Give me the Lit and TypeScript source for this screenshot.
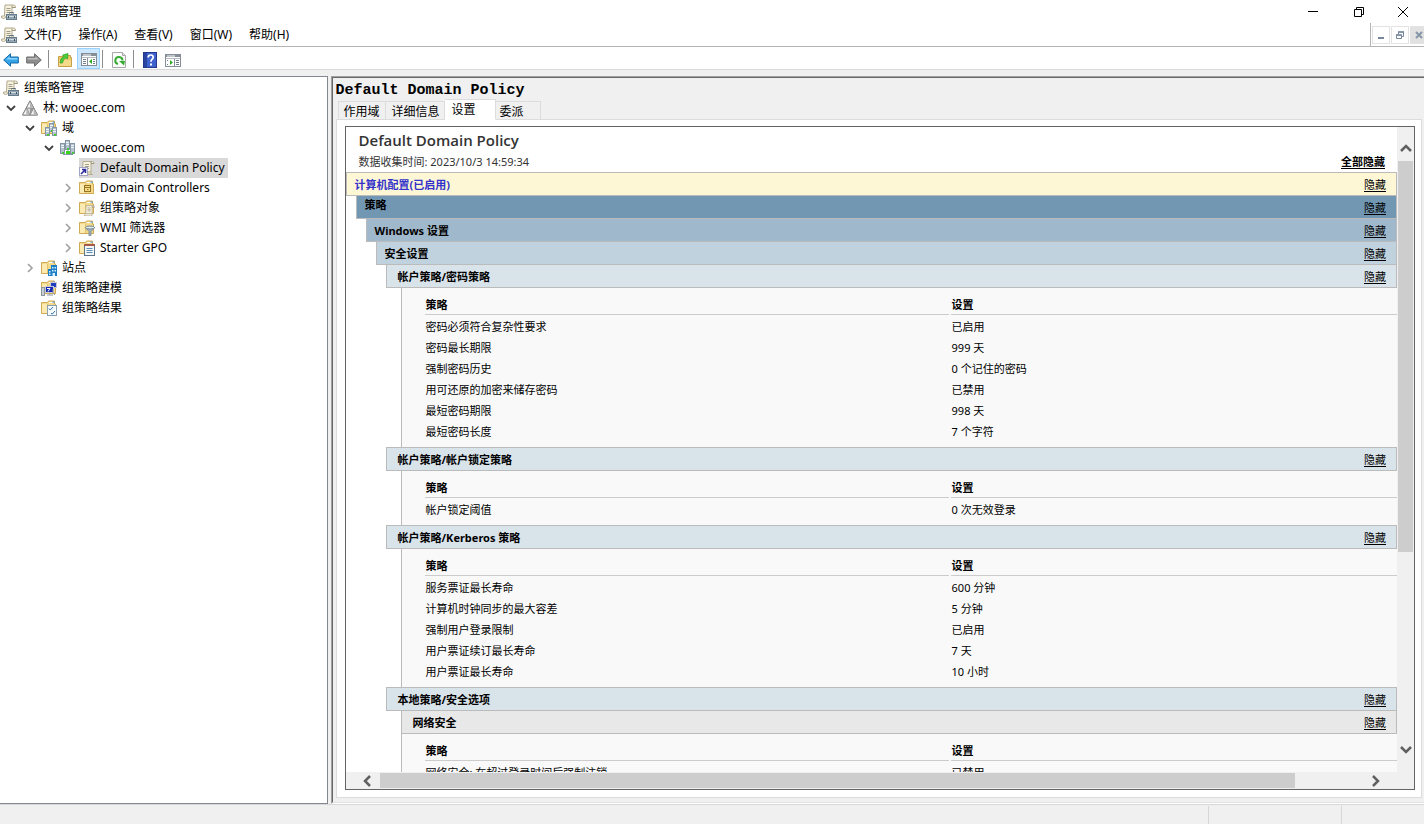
import { LitElement, html, svg, css, nothing } from "lit";
import { customElement, property, state } from "lit/decorators.js";
import { classMap } from "lit/directives/class-map.js";

const folder = svg`
  <path d="M.5 2.500h6l1-1.500h6v3h1v9.500H.5z" fill="#f3d98b" stroke="#d0aa55"/>
  <path d="M8 2.500h5" stroke="#fff"/><path d="M11.500 1.500h2v1.200h-2z" fill="#4a9be0"/>
  <path d="M1 4h5v9H1z" fill="#fbeab2"/><path d="M6.500 4v9" stroke="#e3c26c"/>`;

const scroll = svg`
  <path d="M4 1.500h9.500q1.500 0 1.500 2h-3v8.500H3.500z" fill="#f7f2de" stroke="#b3ab90"/>
  <path d="M12 1.500v2h3" fill="none" stroke="#9d957b"/>
  <path d="M6 4.500h4M6 6.500h4M6 8.500h4" stroke="#a5a08b"/>`;

const tower = (x: number, y: number, h: number) => svg`
  <rect x=${x + 0.5} y=${y + 0.5} width="4" height=${h} fill="#b4c3cd" stroke="#8195a2"/>
  <path d=${`M${x + 1} ${y + 2.5}h3M${x + 1} ${y + 4.5}h3`} stroke="#eef4f7"/>
  <rect x=${x + 2} y=${y + h - 1} width="2" height="1.500" fill="#39d41c"/>`;

const facet = (x: number, y: number) => svg`
  <path d=${`M${x} ${y}l-3.700 7h7.400z`} fill="#f4f4f4" stroke="#7d7d7d" stroke-width=".8"/>
  <path d=${`M${x} ${y + 0.8}v6h3.200z`} fill="#b5b5b5"/>`;

const icons: Record<string, unknown> = {
  gpm: svg`
    <path d="M4 1h8.500q2 0 2 2.500H11V12H5q0 2.500-2.500 2.500T.5 12H3.500z" fill="#f7f2de" stroke="#b0a88e"/>
    <path d="M11 1.500v2h3.500" fill="none" stroke="#9d957b"/>
    <path d="M5.500 4.500h4M5.500 6.500h4M5.500 8.500h3" stroke="#a19c88"/>
    <path d="M8.500 9.500V8.500h4v1" fill="none" stroke="#5b6b77"/>
    <rect x="5.500" y="10.500" width="10" height="5" fill="#93a5b2" stroke="#667c8a"/>
    <path d="M6 12.500h9" stroke="#cfdbe2"/><path d="M7.500 12v2M13.500 12v2" stroke="#43535e"/>`,
  forest: svg`
    <path d="M8 .8L15.500 15H.5z" fill="#8f8f8f" stroke="#808080"/>
    <path d="M4.600 8.200h6.800L8 14.600z" fill="#dcdcdc"/><path d="M8 8.200h3.400L8 14.600z" fill="#9b9b9b"/>
    ${facet(8, 1)}${facet(4.300, 8)}${facet(11.700, 8)}`,
  domains: svg`${folder}${tower(8, 3, 8)}${tower(4, 7, 8)}${tower(11, 7, 8)}`,
  domain: svg`${tower(5, 0, 9)}${tower(0, 3, 10)}${tower(10, 3, 10)}
    <path d="M8 10v3M3 14.500h10" stroke="#8195a2"/><rect x="6" y="11" width="4" height="3" fill="#39d41c"/>`,
  link: svg`${scroll}<path d="M11.500 11.500q0 3 2 3H7" fill="#e5dcb9" stroke="#b3ab90"/>
    <rect x=".5" y="7.500" width="8" height="8" fill="#fff" stroke="#a3a3c4"/>
    <path d="M2 14l4-4M3 9.500h3.500V13" stroke="#2a2a9a" stroke-width="1.600" fill="none"/>`,
  ou: svg`${folder}<rect x="5.500" y="5.500" width="6" height="6" fill="#f8dc84" stroke="#94721f"/>
    <path d="M6 7.500h5M8 9.500h1.500" stroke="#94721f"/>`,
  gpos: svg`${folder}<g transform="translate(4 4.500) scale(.76)">${scroll}<path d="M3 12q0 3-2 3h9q3 0 2-3z" fill="#f7f2de" stroke="#b3ab90"/></g>`,
  wmi: svg`${folder}<path d="M6 7.500h10l-4 4v4l-2 .5v-4.500z" fill="#a3b4bf" stroke="#708592" stroke-width=".8"/>
    <ellipse cx="11" cy="7.500" rx="4.500" ry="1.500" fill="#e3ebef" stroke="#708592"/>`,
  starter: svg`${folder}<rect x="5.500" y="4.500" width="10" height="11" fill="#f3f7fa" stroke="#5d7589"/>
    <path d="M5 4h11v2H5z" fill="#a65a48"/><path d="M7.500 8.500h6M7.500 10.500h6M7.500 12.500h6" stroke="#5c8db5"/>`,
  sites: svg`${folder}<path d="M7 9h3V5h6v11H7z" fill="#1c7fc6"/>
    <path d="M11 7h1.500v1.500H11zM13.500 7H15v1.500h-1.500zM11 10h1.500v1.500H11zM13.500 10H15v1.500h-1.500zM8 11h1.500v1.500H8zM8 13.500h1.500V15H8zM11.500 13H14v3h-2.500z" fill="#d5efff"/>`,
  modeling: svg`${folder}<rect x="9.500" y="2.500" width="6" height="5" fill="#223fc0" stroke="#c8ccd2"/>
    <rect x=".5" y="7.500" width="3" height="8" fill="#c6cdd2" stroke="#8a959c"/>
    <rect x="4.500" y="6.500" width="8" height="6" fill="#1626b4" stroke="#c8ccd2"/>
    <path d="M6 8.500h3l-2 3" stroke="#fff" fill="none"/><path d="M8.500 13v1.500M6 15h6" stroke="#8a959c"/>
    <path d="M12 9v4l2 2" stroke="#8a959c" fill="none"/>`,
  results: svg`${folder}<rect x="6.500" y="5.500" width="9" height="10" fill="#f6fafc" stroke="#8ba0af"/>
    <path d="M8 8.500L9.200 10 12 7M10 13l1.200 1.200L14 11" stroke="#2f78b5" fill="none"/>`,
  back: svg`<path d="M.7 8L7.500 1.800V5H15.300v6H7.500v3.200z" fill="#35a4e8" stroke="#1667a8"/><path d="M3 7.500L6.500 4.500V6H14.500v1.500z" fill="#8bd3fb"/>`,
  forward: svg`<path d="M15.300 8L8.500 1.800V5H.7v6H8.500v3.200z" fill="#8d8d8d" stroke="#6c6c6c"/><path d="M13 7.500L9.500 4.500V6H1.500v1.500z" fill="#bdbdbd"/>`,
  up: svg`<path d="M1.500 4.500h6l1-1h5v2h1v9h-13z" fill="#edc968" stroke="#c79f45"/><path d="M2 8h12v6H2z" fill="#f5da8b"/>
    <path d="M3 11q0-5 4-6.500L5.500 3 11 1.500 10.500 7 9 5.800Q6 7 5.500 11z" fill="#4bd03a" stroke="#2b9c22" stroke-width=".7"/>`,
  treeview: svg`<rect x=".5" y="2.500" width="15" height="12" fill="#fff" stroke="#858e96"/><path d="M1 3h14v2H1z" fill="#858e96"/><path d="M2 4h8" stroke="#fff"/>
    <path d="M1 6.500h14" stroke="#b5bbc1"/><path d="M6.500 7v7" stroke="#858e96"/><path d="M2 8.500h3M2 10.500h3M2 12.500h3M12 8.500h2M12 10.500h2M12 12.500h2" stroke="#71808d"/>
    <path d="M11 8v5L8 10.500z" fill="#2fae24"/>`,
  actions: svg`<rect x=".5" y="2.500" width="15" height="12" fill="#fff" stroke="#858e96"/><path d="M1 3h14v2H1z" fill="#858e96"/><path d="M2 4h8" stroke="#fff"/>
    <path d="M1 6.500h14" stroke="#b5bbc1"/><path d="M9.500 7v7" stroke="#858e96"/><path d="M11 8.500h3M11 10.500h3M11 12.500h3M2 8.500h1M2 12.500h1" stroke="#71808d"/>
    <path d="M5 8v5l3-2.500z" fill="#2fae24"/>`,
  refresh: svg`<path d="M1.500.5h10l3 3v12h-13z" fill="#fdfdfd" stroke="#a8a8a8"/><path d="M11.500.5v3h3" fill="#ddd" stroke="#a8a8a8"/>
    <path d="M7 12A3.600 3.600 0 1 1 11.500 8.500" fill="none" stroke="#36ac31" stroke-width="2"/><path d="M8 9h6l-1 4.500z" fill="#36ac31"/>`,
  help: svg`<rect x="1.500" y=".5" width="13" height="15" fill="#3f62cf" stroke="#23378c"/><path d="M2 1h3v14H2z" fill="#2a459f"/>
    <path d="M6.200 5.500Q6.200 3 8.800 3 11.200 3 11.200 5.200 11.200 6.600 9.800 7.500 9 8 9 9.800" fill="none" stroke="#fff" stroke-width="1.700"/><rect x="8" y="11.500" width="2" height="2" fill="#fff"/>`,
};

const icon = (name: string) => html`<svg class="icon" viewBox="0 0 16 16" width="16" height="16" aria-hidden="true">${icons[name]}</svg>`;

const chevron = (dir: "up" | "down" | "left" | "right") => {
  const d = { up: "M1 9l5-5 5 5", down: "M1 3l5 5 5-5", left: "M9 1L4 6l5 5", right: "M3 1l5 5-5 5" }[dir];
  return html`<svg viewBox="0 0 12 12" width="12" height="12" aria-hidden="true"><path d=${d} fill="none" stroke="#606060" stroke-width="2.500"/></svg>`;
};

const base = css`
  * { box-sizing: border-box; }
  button { font: inherit; color: inherit; background: none; border: 0; padding: 0; margin: 0; }
  svg { display: block; flex: none; }
`;

interface Node { label: string; icon: string; depth: number; open?: boolean; selected?: boolean; }

const nodes: Node[] = [
  { label: "组策略管理", icon: "gpm", depth: 0 },
  { label: "林: wooec.com", icon: "forest", depth: 1, open: true },
  { label: "域", icon: "domains", depth: 2, open: true },
  { label: "wooec.com", icon: "domain", depth: 3, open: true },
  { label: "Default Domain Policy", icon: "link", depth: 4, selected: true },
  { label: "Domain Controllers", icon: "ou", depth: 4, open: false },
  { label: "组策略对象", icon: "gpos", depth: 4, open: false },
  { label: "WMI 筛选器", icon: "wmi", depth: 4, open: false },
  { label: "Starter GPO", icon: "starter", depth: 4, open: false },
  { label: "站点", icon: "sites", depth: 2, open: false },
  { label: "组策略建模", icon: "modeling", depth: 2 },
  { label: "组策略结果", icon: "results", depth: 2 },
];

@customElement("console-tree")
class ConsoleTree extends LitElement {
  static styles = [base, css`
    :host { display: block; background: #fff; border: 1px solid #828790; border-width: 1px 1px 1px 0; padding-top: 1px; overflow: hidden; }
    .tree { list-style: none; margin: 0; padding: 0 0 0 3px; }
    .row { display: flex; align-items: center; height: 20px; white-space: nowrap; }
    .d2 { padding-left: 19px; } .d3 { padding-left: 38px; } .d4 { padding-left: 57px; }
    .twisty { width: 16px; height: 16px; margin-right: 3px; display: grid; place-items: center; flex: none; }
    .item { display: flex; align-items: center; height: 20px; }
    .icon { margin: 0 2px 0 0; }
    .label { padding: 0 3px; height: 20px; line-height: 20px; }
    .selected { background: #d9d9d9; }
  `];
  render() {
    return html`<ul class="tree" role="tree" aria-label="组策略管理">
      ${nodes.map((n) => html`<li class="row d${n.depth}" role="treeitem" aria-selected=${n.selected ? "true" : "false"}>
        ${n.depth === 0 ? nothing : n.open === undefined ? html`<span class="twisty"></span>` : html`<button class="twisty" aria-label=${n.label}>
          <svg viewBox="0 0 10 10" width="10" height="10">${n.open
            ? svg`<path d="M1 3l4 4 4-4" fill="none" stroke="#404040" stroke-width="1.800"/>`
            : svg`<path d="M3 1l4 4-4 4" fill="none" stroke="#a0a0a0" stroke-width="1.600"/>`}</svg></button>`}
        <span class=${classMap({ item: true, selected: !!n.selected })}>${icon(n.icon)}<span class="label">${n.label}</span></span>
      </li>`)}
    </ul>`;
  }
}

type Rows = [string, string][];
interface Section { title: string; level: number; rows?: Rows; }

const sections: Section[] = [
  { title: "计算机配置(已启用)", level: 0 },
  { title: "策略", level: 1 },
  { title: "Windows 设置", level: 2 },
  { title: "安全设置", level: 3 },
  { title: "帐户策略/密码策略", level: 4, rows: [
    ["密码必须符合复杂性要求", "已启用"], ["密码最长期限", "999 天"], ["强制密码历史", "0 个记住的密码"],
    ["用可还原的加密来储存密码", "已禁用"], ["最短密码期限", "998 天"], ["最短密码长度", "7 个字符"]] },
  { title: "帐户策略/帐户锁定策略", level: 4, rows: [["帐户锁定阈值", "0 次无效登录"]] },
  { title: "帐户策略/Kerberos 策略", level: 4, rows: [
    ["服务票证最长寿命", "600 分钟"], ["计算机时钟同步的最大容差", "5 分钟"], ["强制用户登录限制", "已启用"],
    ["用户票证续订最长寿命", "7 天"], ["用户票证最长寿命", "10 小时"]] },
  { title: "本地策略/安全选项", level: 4 },
  { title: "网络安全", level: 5, rows: [["网络安全: 在超过登录时间后强制注销", "已禁用"]] },
];

@customElement("policy-report")
class PolicyReport extends LitElement {
  static styles = [base, css`
    :host { display: grid; grid-template: minmax(0, 1fr) 17px / minmax(0, 1fr) 17px; border: 1px solid #646464; background: #fff; font-size: 11px; line-height: 15px; color: #000; }
    .view { overflow: hidden; }
    .head { height: 45px; padding: 3px 12px 0 13px; color: #333; }
    .title { margin: 0; font-family: "Open Sans", "Noto Sans", sans-serif; font-size: 15px; line-height: 20px; font-weight: 600; }
    .meta { display: flex; justify-content: space-between; padding-top: 4px; }
    a { color: #000; text-decoration: underline; text-underline-offset: 2px; }
    .all { font-weight: 700; }
    .bar { display: flex; justify-content: space-between; align-items: center; height: 24px; margin: 0 0 -1px; padding: 1px 10px 0 8px; border: 1px solid #bbb; font-size: 11px; font-weight: 700; }
    .bar a { font-weight: 400; }
    .l0 { background: #fef7d6; color: #33c; }
    .l1 { background: #7197b3; margin-left: 10px; }
    .l1 .name { align-self: flex-start; }
    .l2 { background: #a0b8cb; margin-left: 20px; }
    .l3 { background: #c0d2de; margin-left: 30px; }
    .l4 { background: #d9e3ea; margin-left: 40px; padding-left: 11px; }
    .l5 { background: #e8e8e8; margin-left: 55px; padding-left: 11px; }
    .name { margin: 0; font: inherit; }
    .body { margin: 1px 0 0 55px; border-left: 1px solid #bbb; background: #f9f9f9; padding: 1px 0 6px 21px; overflow: hidden; }
    table { width: calc(100% + 2px); table-layout: fixed; border-spacing: 2px 0; border-collapse: separate; }
    .c1 { width: 54%; }
    th { text-align: left; font-weight: 700; padding: 8px 1px 2px; border-bottom: 1px solid #ccc; }
    td { padding: 4px 1px 2px; }
    .v, .h { background: #f0f0f0; display: flex; align-items: center; }
    .v { flex-direction: column; padding: 15px 1px 16px 1px; }
    .h { padding: 1px 15px 1px 15px; }
    .v .track, .h .track { flex: 1; display: flex; align-self: stretch; }
    .v .track { flex-direction: column; padding-top: 7px; }
    .h .track { padding: 0 0 0 7px; }
    .thumb { background: #cdcdcd; }
    .v .thumb { height: 67%; }
    .h .thumb { width: 92.4%; }
    .corner { background: #f0f0f0; }
  `];
  render() {
    return html`
      <div class="view">
        <header class="head">
          <h2 class="title">Default Domain Policy</h2>
          <div class="meta"><span>数据收集时间: 2023/10/3 14:59:34</span><a class="all" href="#">全部隐藏</a></div>
        </header>
        ${sections.map((s) => html`
          <div class="bar l${s.level}"><h3 class="name">${s.title}</h3><a href="#">隐藏</a></div>
          ${s.rows ? html`<div class="body"><table>
            <thead><tr><th class="c1" scope="col">策略</th><th scope="col">设置</th></tr></thead>
            <tbody>${s.rows.map(([k, v]) => html`<tr><td>${k}</td><td>${v}</td></tr>`)}</tbody>
          </table></div>` : nothing}`)}
      </div>
      <div class="v"><button aria-label="向上滚动">${chevron("up")}</button><div class="track"><div class="thumb"></div></div><button aria-label="向下滚动">${chevron("down")}</button></div>
      <div class="h"><button aria-label="向左滚动">${chevron("left")}</button><div class="track"><div class="thumb"></div></div><button aria-label="向右滚动">${chevron("right")}</button></div>
      <div class="corner"></div>`;
  }
}

@customElement("app-root")
class AppRoot extends LitElement {
  @property() heading = "Default Domain Policy";
  @state() private tab = "设置";

  static styles = [base, css`
    :host { display: flex; flex-direction: column; height: 100vh; background: #f0f0f0; overflow: hidden; color: #000;
      font-family: "Noto Sans", "Noto Sans CJK SC", sans-serif; font-size: 12px; line-height: 18px; }
    .caption { display: flex; align-items: center; height: 23px; background: #fff; padding-left: 1px; }
    .caption h1 { font: inherit; margin: 0 auto 0 4px; }
    .win { width: 46px; height: 22px; display: grid; place-items: center; }
    .win:last-child { width: 42px; }
    .menubar { display: flex; height: 24px; background: #fff; }
    .menus { flex: 1; display: flex; align-items: center; gap: 17px; padding-left: 1px; border-bottom: 1px solid #b4b4b4; border-right: 1px solid #b4b4b4; }
    .menus .icon { margin-right: -10px; }
    .mdi { display: flex; gap: 1px; padding: 3px 0 0 1px; width: 53px; overflow: hidden; border-bottom: 1px solid #b4b4b4; }
    .mdi button { flex: none; width: 18px; height: 18px; border: 1px solid #e3e3e3; display: grid; place-items: center; }
    .mdi .off { background: #e1e1e1; }
    .toolbar { display: flex; align-items: center; height: 23px; background: #fff; border-bottom: 1px solid #d9d9d9; padding: 1px 0 0 3px; }
    .tool { width: 16px; height: 21px; padding-top: 2px; display: grid; place-items: center; margin-right: 7px; }
    .tool.on { width: 23px; background: #cce8ff; border: 1px solid #99d1ff; padding-top: 1px; margin: 0 3px 0 -3px; }
    .sep { width: 1px; height: 18px; background: #8d8d8d; margin: 0 8px 0 -1px; }
    .main { flex: 1; min-height: 0; display: grid; grid-template-columns: 23% minmax(0, 1fr); column-gap: 3px; padding-top: 6px; }
    .pane { display: flex; flex-direction: column; min-height: 0; border-top: 1px solid #a0a0a0; border-left: 1px solid #a0a0a0; border-bottom: 1px solid #fff; }
    .inner { flex: 1; min-height: 0; display: flex; flex-direction: column; border-top: 1px solid #696969; border-left: 1px solid #696969; border-bottom: 1px solid #e3e3e3; padding: 3px 2px 4px 3px; }
    .heading { margin: 0; font: 700 15px/19px "Liberation Mono", monospace; }
    .tabs { display: flex; align-items: flex-end; padding-left: 2px; height: 20px; position: relative; margin-bottom: -1px; }
    .tab { height: 19px; padding: 1px 4px 0; border: 1px solid #dcdcdc; border-left-width: 0; line-height: 18px; text-align: left; white-space: nowrap; }
    .tab:first-child { border-left-width: 1px; padding: 1px 5px 0; }
    .tab:nth-child(2) { padding: 1px 4px 0 6px; }
    .tab:nth-child(4) { min-width: 45px; }
    .tab.active { height: 21px; min-width: 51px; padding: 0 0 0 7px; background: #fff; border-bottom-color: #fff; }
    .panel { flex: 1; min-height: 0; display: flex; background: #fff; border: 1px solid #dcdcdc; padding: 6px 6px 7px 8px; }
    policy-report { flex: 1; min-width: 0; }
    .status { display: flex; justify-content: flex-end; height: 20px; border-top: 1px solid #d7d7d7; padding-top: 1px; }
    .cell { border-left: 1px solid #d7d7d7; width: 133px; }
    .cell:last-child { width: 83px; }
  `];

  render() {
    return html`
      <header class="caption">${icon("gpm")}<h1>组策略管理</h1>
        <button class="win" aria-label="最小化"><svg width="10" height="10"><path d="M0 4.500h10" stroke="#000"/></svg></button>
        <button class="win" aria-label="还原"><svg width="10" height="10"><path d="M.5 2.500h7v7h-7zM2.500 2.500v-2h7v7h-2" fill="none" stroke="#000"/></svg></button>
        <button class="win" aria-label="关闭"><svg width="10" height="10"><path d="M0 0l10 10M10 0L0 10" stroke="#000"/></svg></button>
      </header>
      <div class="menubar">
        <nav class="menus">${icon("gpm")}${["文件(F)", "操作(A)", "查看(V)", "窗口(W)", "帮助(H)"].map((m) => html`<button>${m}</button>`)}</nav>
        <div class="mdi">
          <button aria-label="最小化子窗口"><svg width="8" height="8"><path d="M1 7h6" stroke="#77889c" stroke-width="2"/></svg></button>
          <button aria-label="还原子窗口"><svg width="8" height="8"><path d="M.5 4h5v3.500h-5zM2.500 3.500V1h5v4.500H6" fill="none" stroke="#77889c"/><path d="M2 1h6M0 4h6" stroke="#77889c" stroke-width="1.500"/></svg></button>
          <button class="off" aria-label="关闭子窗口"><svg width="8" height="8"><path d="M1 1l6 6M7 1L1 7" stroke="#8796a8" stroke-width="2"/></svg></button>
        </div>
      </div>
      <div class="toolbar" role="toolbar">
        <button class="tool" aria-label="后退">${icon("back")}</button>
        <button class="tool" aria-label="前进">${icon("forward")}</button>
        <span class="sep"></span>
        <button class="tool" aria-label="向上一级">${icon("up")}</button>
        <button class="tool on" aria-label="显示控制台树">${icon("treeview")}</button>
        <span class="sep"></span>
        <button class="tool" aria-label="刷新">${icon("refresh")}</button>
        <span class="sep"></span>
        <button class="tool" aria-label="帮助">${icon("help")}</button>
        <button class="tool" aria-label="显示操作窗格">${icon("actions")}</button>
      </div>
      <main class="main">
        <console-tree></console-tree>
        <section class="pane"><div class="inner">
          <h2 class="heading">${this.heading}</h2>
          <div class="tabs" role="tablist">${["作用域", "详细信息", "设置", "委派"].map((t) => html`
            <button role="tab" class=${classMap({ tab: true, active: t === this.tab })} aria-selected=${t === this.tab ? "true" : "false"} @click=${() => (this.tab = t)}>${t}</button>`)}</div>
          <div class="panel" role="tabpanel"><policy-report></policy-report></div>
        </div></section>
      </main>
      <footer class="status"><span class="cell"></span><span class="cell"></span></footer>`;
  }
}
